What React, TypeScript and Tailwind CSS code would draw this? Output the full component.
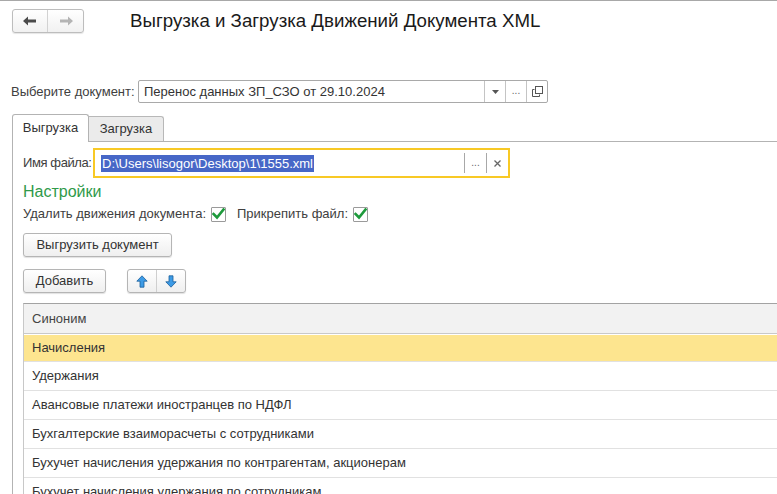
import React from "react";

const font = { fontFamily: '"Liberation Sans", Arial, sans-serif' };

function ArrowLeft({ color }: { color: string }) {
  return (
    <svg width="14" height="10" viewBox="0 0 14 10">
      <path d="M0 5 L5 0.5 L5 3.5 L13 3.5 L13 6.5 L5 6.5 L5 9.5 Z" fill={color} />
    </svg>
  );
}
function ArrowRight({ color }: { color: string }) {
  return (
    <svg width="14" height="10" viewBox="0 0 14 10">
      <path d="M14 5 L9 0.5 L9 3.5 L1 3.5 L1 6.5 L9 6.5 L9 9.5 Z" fill={color} />
    </svg>
  );
}
function BlueArrow({ up }: { up: boolean }) {
  return (
    <svg width="12" height="13" viewBox="0 0 12 13" style={{ transform: up ? "none" : "rotate(180deg)" }}>
      <path d="M6 0.8 L11.2 6.2 L8 6.2 L8 12.2 L4 12.2 L4 6.2 L0.8 6.2 Z" fill="#3d9be6" stroke="#1d5f9a" strokeWidth="0.8" strokeLinejoin="round" />
    </svg>
  );
}
function Check() {
  return (
    <div className="w-[15px] h-[15px] border border-[#9a9a9a] bg-white flex items-center justify-center rounded-[1px]">
      <svg width="13" height="12" viewBox="0 0 13 12">
        <path d="M1.5 6 L5 9.5 L11.5 1.5" fill="none" stroke="#1e9a3c" strokeWidth="2.6" strokeLinecap="square" />
      </svg>
    </div>
  );
}

const btn =
  "h-[24px] border border-[#b5b5b5] rounded-[3px] bg-gradient-to-b from-white to-[#efefef] shadow-[0_1px_1px_rgba(0,0,0,0.12)] flex items-center justify-center text-[13px] text-[#333] whitespace-nowrap";

const rows = [
  "Начисления",
  "Удержания",
  "Авансовые платежи иностранцев по НДФЛ",
  "Бухгалтерские взаиморасчеты с сотрудниками",
  "Бухучет начисления удержания по контрагентам, акционерам",
  "Бухучет начисления удержания по сотрудникам",
];

export default function App() {
  return (
    <div className="w-[777px] h-[494px] bg-white overflow-hidden" style={font}>
      <div className="border-t border-[#a8a8a8]" />
      {/* header */}
      <div className="flex items-center mt-[8px] pl-[12px] h-[24px]">
        <div className="flex h-[24px] w-[72px] border border-[#bdbdbd] rounded-[3px] bg-gradient-to-b from-white to-[#f1f1f1] shadow-[0_1px_1px_rgba(0,0,0,0.1)]">
          <div className="w-[35px] flex items-center justify-center border-r border-[#d2d2d2]">
            <ArrowLeft color="#4a4a4a" />
          </div>
          <div className="flex-1 flex items-center justify-center">
            <ArrowRight color="#b4b4b4" />
          </div>
        </div>
        <div className="ml-[46px] text-[18.7px] leading-[22px] text-[#1a1a1a] whitespace-nowrap">
          Выгрузка и Загрузка Движений Документа XML
        </div>
      </div>

      {/* select row */}
      <div className="flex items-center mt-[47px] pl-[11px] h-[23px]">
        <div className="text-[13px] text-[#404040] w-[127px] shrink-0 whitespace-nowrap">Выберите документ:</div>
        <div className="flex h-[23px] w-[410px] border border-[#a9a9a9] rounded-[2px] bg-white">
          <div className="flex-1 flex items-center pl-[5px] text-[13px] text-[#333] whitespace-nowrap">
            Перенос данных ЗП_СЗО от 29.10.2024
          </div>
          <div className="w-[21px] border-l border-[#c4c4c4] flex items-center justify-center">
            <svg width="7" height="4" viewBox="0 0 7 4">
              <path d="M0 0 L7 0 L3.5 4 Z" fill="#555" />
            </svg>
          </div>
          <div className="w-[21px] border-l border-[#c4c4c4] flex items-end justify-center pb-[6px] text-[10px] leading-[10px] text-[#666]">
            ...
          </div>
          <div className="w-[21px] border-l border-[#c4c4c4] flex items-center justify-center">
            <svg width="11" height="11" viewBox="0 0 11 11">
              <rect x="3.5" y="0.5" width="7" height="7" fill="none" stroke="#555" />
              <path d="M2.5 3.5 L0.5 3.5 L0.5 10.5 L7.5 10.5 L7.5 8.5" fill="none" stroke="#555" />
            </svg>
          </div>
        </div>
      </div>

      {/* tabs */}
      <div className="flex items-end mt-[10px] pl-[12px] h-[28px]">
        <div className="h-[28px] w-[77px] border border-b-0 border-[#b3b3b3] rounded-t-[3px] bg-white flex items-center justify-center text-[13px] text-[#333] relative z-10 -mb-px pb-[1px]">
          Выгрузка
        </div>
        <div className="h-[25px] w-[75px] border border-l-0 border-b-0 border-[#b8b8b8] rounded-tr-[3px] bg-[#ebebeb] flex items-center justify-center text-[13px] text-[#333]">
          Загрузка
        </div>
      </div>

      {/* panel */}
      <div className="ml-[12px] border-l border-t border-[#b3b3b3] pl-[10px] h-[400px]">
        <div className="flex items-center mt-[6px] h-[30px]">
          <div className="text-[13px] text-[#404040] w-[70px] shrink-0 whitespace-nowrap tracking-[-0.4px]">Имя файла:</div>
          <div className="flex h-[30px] w-[417px] shrink-0 border-2 border-[#f8c925] bg-white">
            <div className="flex-1 flex items-center pl-[6px]">
              <span className="bg-[#4767c7] text-white text-[13px] leading-[17px] px-[1px] whitespace-nowrap">
                D:\Users\lisogor\Desktop\1\1555.xml
              </span>
            </div>
            <div className="w-[22px] my-[3px] border-l border-[#a8a8a8] flex items-end justify-center pb-[5px] text-[10px] leading-[10px] text-[#666]">
              ...
            </div>
            <div className="w-[22px] my-[3px] border-l border-[#a8a8a8] flex items-center justify-center">
              <svg width="7" height="7" viewBox="0 0 7 7">
                <path d="M0.5 0.5 L6.5 6.5 M6.5 0.5 L0.5 6.5" stroke="#666" strokeWidth="1.3" />
              </svg>
            </div>
          </div>
        </div>

        <div className="mt-[4px] text-[16px] leading-[20px] text-[#2f9a4a]">Настройки</div>

        <div className="flex items-center mt-[4px] h-[16px] text-[13px] text-[#404040] whitespace-nowrap">
          <span>Удалить движения документа:</span>
          <div className="ml-[5px]">
            <Check />
          </div>
          <span className="ml-[11px]">Прикрепить файл:</span>
          <div className="ml-[5px]">
            <Check />
          </div>
        </div>

        <div className={`${btn} mt-[11px] w-[149px]`}>Выгрузить документ</div>

        <div className="flex items-center mt-[12px] h-[24px]">
          <div className={`${btn} w-[83px]`}>Добавить</div>
          <div className="ml-[21px] flex h-[24px] w-[59px] border border-[#b5b5b5] rounded-[3px] bg-gradient-to-b from-white to-[#efefef] shadow-[0_1px_1px_rgba(0,0,0,0.12)]">
            <div className="w-[29px] border-r border-[#cfcfcf] flex items-center justify-center">
              <BlueArrow up />
            </div>
            <div className="flex-1 flex items-center justify-center">
              <BlueArrow up={false} />
            </div>
          </div>
        </div>

        {/* table */}
        <div className="mt-[10px] border-t border-[#a3a3a3] border-l border-l-[#c8c8c8]">
          <div className="h-[30px] bg-[#f2f2f2] border-b border-[#c9c9c9] flex items-center pl-[8px] text-[13px] text-[#444]">
            Синоним
          </div>
          {rows.map((r, i) => (
            <div key={r} className={`border-b border-[#e1e1e1] ${i === 0 ? "h-[28px] pt-px" : "h-[29px]"}`}>
              <div
                className={`flex items-center pl-[8px] text-[13px] text-[#333] whitespace-nowrap ${
                  i === 0 ? "h-[26px] bg-[#fde58f]" : "h-[28px]"
                }`}
              >
                {r}
              </div>
            </div>
          ))}
        </div>
      </div>
    </div>
  );
}
